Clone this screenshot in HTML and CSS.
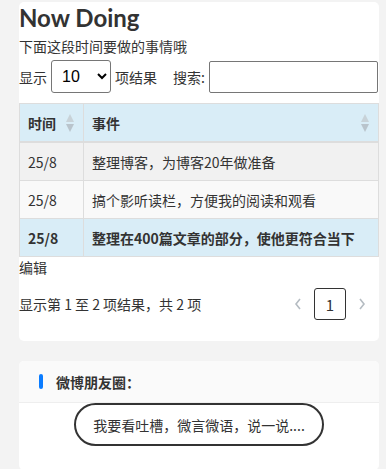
FILE: index.html
```html
<!DOCTYPE html>
<html lang="zh-CN">

<head>
    <meta charset="UTF-8">
    <meta name="viewport" content="width=device-width, initial-scale=1.0">
    <link rel="stylesheet" href="styles.css">
</head>

<body>
    <div class="page">
        <div class="card">
            <h2 class="title">Now Doing</h2>
            <p class="subtitle">下面这段时间要做的事情哦</p>
            <div class="toolbar">
                <label class="length"><span>显示</span>
                    <select class="length-select">
                        <option>10</option>
                        <option>25</option>
                        <option>50</option>
                    </select>
                    <span>项结果</span></label>
                <label class="search"><span>搜索:</span><input type="search" class="search-input"></label>
            </div>
            <table class="todo-table">
                <thead>
                    <tr>
                        <th class="col-time">
                            <div class="th-inner">时间
                                <svg class="sort" width="10" height="20" viewBox="0 0 10 20">
                                    <polygon points="1,9 5,1 9,9" fill="#c8d2d8" />
                                    <polygon points="1,11 9,11 5,19" fill="#b9c4cc" />
                                </svg>
                            </div>
                        </th>
                        <th>
                            <div class="th-inner">事件
                                <svg class="sort" width="10" height="20" viewBox="0 0 10 20">
                                    <polygon points="1,9 5,1 9,9" fill="#c8d2d8" />
                                    <polygon points="1,11 9,11 5,19" fill="#b9c4cc" />
                                </svg>
                            </div>
                        </th>
                    </tr>
                </thead>
                <tbody>
                    <tr class="odd">
                        <td>25/8</td>
                        <td>整理博客，为博客20年做准备</td>
                    </tr>
                    <tr class="even">
                        <td>25/8</td>
                        <td>搞个影听读栏，方便我的阅读和观看</td>
                    </tr>
                    <tr class="info">
                        <td>25/8</td>
                        <td>整理在400篇文章的部分，使他更符合当下</td>
                    </tr>
                </tbody>
            </table>
            <div class="edit">编辑</div>
            <div class="pager">
                <div class="pager-info">显示第 1 至 2 项结果，共 2 项</div>
                <div class="pager-nav">
                    <svg class="chev" width="10" height="14" viewBox="0 0 10 14">
                        <polyline points="7,2 3,7 7,12" fill="none" stroke="#b5bcc2" stroke-width="1.6" />
                    </svg>
                    <span class="page-num">1</span>
                    <svg class="chev" width="10" height="14" viewBox="0 0 10 14">
                        <polyline points="3,2 7,7 3,12" fill="none" stroke="#b5bcc2" stroke-width="1.6" />
                    </svg>
                </div>
            </div>
        </div>

        <div class="card weibo">
            <div class="weibo-head">
                <span class="bar"></span>
                <span class="weibo-title">微博朋友圈：</span>
            </div>
            <div class="weibo-body">
                <a class="pill" href="#">我要看吐槽，微言微语，说一说....</a>
            </div>
        </div>
    </div>
</body>

</html>
```

FILE: styles.css
```css
body {
    margin: 0;
    background: #f3f3f3;
    color: #333;
    font-family: "Noto Sans CJK SC", "Noto Sans", sans-serif;
    font-size: 14px;
}

.page {
    padding: 2px 7px 0 19px;
}

.card {
    background: #fff;
    border-radius: 5px;
    padding-bottom: 21px;
}

.title {
    margin: 0;
    font-family: Lato, "Noto Sans", sans-serif;
    font-size: 24px;
    font-weight: bold;
    line-height: 32px;
}

.subtitle {
    margin: 2px 0 0;
    line-height: 20px;
}

.toolbar {
    display: flex;
    align-items: center;
    margin-top: 4px;
    height: 33px;
    white-space: nowrap;
}

.length {
    display: flex;
    align-items: center;
    gap: 4px;
    flex-shrink: 0;
}

.length-select {
    width: 60px;
    height: 33px;
    font-size: 16px;
    font-family: "Liberation Sans", sans-serif;
    color: #000;
    background: #fff;
    border: 1px solid #767676;
    border-radius: 3px;
    padding-left: 6px;
}

.search {
    display: flex;
    align-items: center;
    gap: 4px;
    margin-left: 16px;
    flex-shrink: 0;
}

.search-input {
    width: 169px;
    height: 32px;
    box-sizing: border-box;
    border: 1px solid #767676;
    border-radius: 2px;
}

.todo-table {
    width: 100%;
    margin-top: 10px;
    border-collapse: collapse;
}

.todo-table th,
.todo-table td {
    border: 1px solid #ddd;
    padding: 0 8px;
    height: 37px;
    text-align: left;
    line-height: 20px;
}

.todo-table thead th {
    background: #d9edf7;
    font-weight: bold;
    border-bottom-width: 2px;
}

.col-time {
    width: 47px;
}

.th-inner {
    display: flex;
    align-items: center;
    justify-content: space-between;
}

.sort {
    display: block;
}

.odd td {
    background: #f1f1f1;
}

.even td {
    background: #f9f9f9;
}

.info td {
    background: #d9edf7;
    font-weight: bold;
}

.edit {
    line-height: 20px;
}

.pager {
    display: flex;
    align-items: center;
    justify-content: space-between;
    margin-top: 11px;
}

.pager-nav {
    display: flex;
    align-items: center;
    gap: 11px;
    margin-right: 12px;
}

.page-num {
    width: 30px;
    height: 30px;
    border: 1px solid #333;
    border-radius: 3px;
    display: flex;
    align-items: center;
    justify-content: center;
    font-size: 15px;
}

.weibo {
    margin-top: 20px;
    padding-bottom: 24px;
}

.weibo-head {
    display: flex;
    align-items: center;
    height: 41px;
    padding-left: 20px;
    background: #fafafa;
    border-bottom: 1px solid #eee;
    border-radius: 5px 5px 0 0;
}

.bar {
    width: 4px;
    height: 15px;
    border-radius: 2px;
    background: #0a7cff;
    margin-right: 13px;
}

.weibo-title {
    font-weight: bold;
}

.weibo-body {
    display: flex;
    justify-content: center;
}

.pill {
    width: 246px;
    height: 39px;
    border: 2px solid #333;
    border-radius: 22px;
    display: flex;
    align-items: center;
    justify-content: center;
    color: #333;
    text-decoration: none;
}
```
